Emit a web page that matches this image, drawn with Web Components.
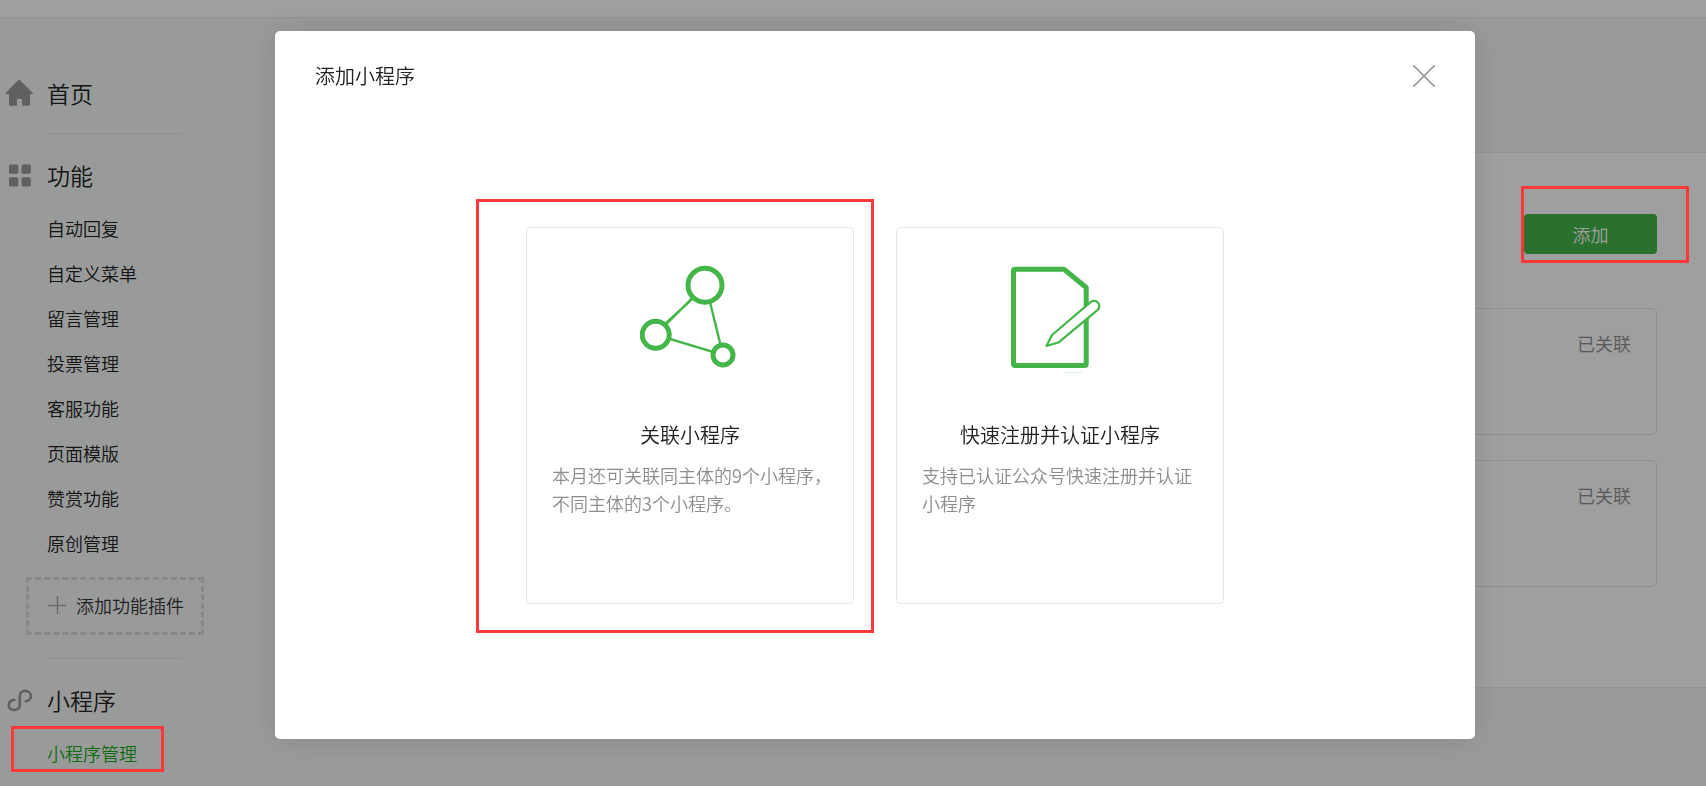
<!DOCTYPE html>
<html lang="zh-CN">
<head>
<meta charset="utf-8">
<title>小程序管理</title>
<style>
  html, body { margin: 0; min-height: 100%; }
  body {
    background: #f6f8f7;
    color: #222;
    font: 350 18px/28px "Noto Sans CJK SC", sans-serif;
    overflow: hidden;
  }
</style>
</head>
<body>
<admin-page></admin-page>

<script>
const define = (name, html) => {
  const template = document.createElement("template");
  template.innerHTML = html;
  customElements.define(name, class extends HTMLElement {
    constructor() {
      super();
      this.attachShadow({ mode: "open" }).append(template.content.cloneNode(true));
    }
  });
};

/* Red frame that surrounds its nearest positioned ancestor */
define("mark-frame", `
<style>
  :host {
    position: absolute; z-index: 20; pointer-events: none; box-sizing: border-box;
    inset: var(--frame-inset, 0); border: 3px solid #fc3838;
  }
</style>`);

define("nav-section", `
<style>
  :host { display: block; }
  h2 { display: grid; grid-template-columns: 47px 1fr; align-items: center; margin: 0; font: inherit; font-size: 23px; line-height: 30px; }
  .icon { display: flex; padding-left: 5px; }
  ul { display: block; margin: 0; padding: 16px 0 0 47px; }
</style>
<h2><span class="icon"><slot name="icon"></slot></span><slot name="title"></slot></h2>
<ul><slot></slot></ul>`);

define("nav-item", `
<style>
  :host { display: block; line-height: 45px; }
  a { position: relative; display: inline-block; color: inherit; text-decoration: none; }
  :host([active]) a { color: #1aad19; }
  mark-frame { display: none; --frame-inset: -5px -27px 4px -36px; }
  :host([active]) mark-frame { display: block; }
</style>
<a href="#"><slot></slot><mark-frame></mark-frame></a>`);

define("nav-divider", `
<style>
  :host { display: block; height: 1px; width: 134px; margin: 23px 0 26px 48px; background: #e4e6e5; }
</style>`);

define("add-plugin", `
<style>
  :host { display: block; margin: 11px 0 0 26px; }
  button {
    box-sizing: border-box; display: flex; align-items: center; gap: 10px; width: 178px; height: 58px;
    padding: 0 0 2px 19px; border: 3px dashed #d9dadc; background: none; color: #353535; font: inherit; cursor: pointer;
    white-space: nowrap;
  }
  svg { flex: none; }
</style>
<button type="button">
  <svg width="18" height="18" viewBox="0 0 18 18" stroke="#aaa" stroke-width="1.500"><path d="M0 9.500h18M9.500 0v18"/></svg>
  <slot></slot>
</button>`);

define("main-nav", `
<style>
  :host { display: block; padding-top: 60px; }
  svg { display: block; }
  .home { height: 32px; overflow: visible; }
</style>
<nav>
  <nav-section class="home">
    <svg slot="icon" width="28" height="28" viewBox="0 0 28 28" fill="#9a9a9a"><path d="M13 1.200q1-.8 2 0L27.600 13.800q.6 1.200-.6 1.200H25v10.500q0 1.300-1.300 1.300H17V20h-5v6.800H5.300Q4 26.800 4 25.500V15H1.500q-1.200 0-.6-1.200z"/></svg>
    <span slot="title">首页</span>
  </nav-section>
  <nav-divider></nav-divider>
  <nav-section>
    <svg slot="icon" width="28" height="28" viewBox="0 0 28 28" fill="#9a9a9a"><rect x="4" y="3.500" width="9.300" height="9.300" rx="1.500"/><rect x="16.500" y="3.500" width="9.300" height="9.300" rx="1.500"/><rect x="4" y="16.200" width="9.300" height="9.300" rx="1.500"/><rect x="16.500" y="16.200" width="9.300" height="9.300" rx="1.500"/></svg>
    <span slot="title">功能</span>
    <nav-item>自动回复</nav-item>
    <nav-item>自定义菜单</nav-item>
    <nav-item>留言管理</nav-item>
    <nav-item>投票管理</nav-item>
    <nav-item>客服功能</nav-item>
    <nav-item>页面模版</nav-item>
    <nav-item>赞赏功能</nav-item>
    <nav-item>原创管理</nav-item>
  </nav-section>
  <add-plugin>添加功能插件</add-plugin>
  <nav-divider></nav-divider>
  <nav-section>
    <svg slot="icon" width="28" height="28" viewBox="0 0 28 28" fill="none" stroke="#9a9a9a" stroke-width="2.600" stroke-linecap="round"><path d="M9.300 13.800C1.500 15 2.600 24.100 9 24.100c3.700 0 5.800-2.200 5.800-5V10c0-3.200 2.300-5.100 5.400-5.100 7 0 8.200 9.400.5 10.300"/></svg>
    <span slot="title">小程序</span>
    <nav-item active>小程序管理</nav-item>
  </nav-section>
</nav>`);

define("linked-app", `
<style>
  :host {
    box-sizing: border-box; display: flex; justify-content: flex-end; min-height: 127px;
    padding: 20px 25px; border: 1px solid #e4e4e4; border-radius: 5px; color: #8d8d8d;
  }
</style>
<slot></slot>`);

define("app-panel", `
<style>
  :host {
    box-sizing: border-box; display: flex; flex-direction: column; gap: 54px; min-height: 536px;
    padding: 61px 49px 98px; background: #fff; border: solid #ededef; border-width: 1px 0;
  }
  .bar { display: flex; justify-content: flex-end; }
  .add { position: relative; display: flex; --frame-inset: -28px -32px -9px -3px; }
  button { width: 133px; height: 40px; padding: 0; border: 0; border-radius: 4px; background: #44b549; color: #fff; font: inherit; cursor: pointer; }
  .list { display: grid; gap: 25px; }
</style>
<div class="bar"><div class="add"><button type="button">添加</button><mark-frame></mark-frame></div></div>
<div class="list"><linked-app>已关联</linked-app><linked-app>已关联</linked-app></div>`);

define("option-card", `
<style>
  :host { position: relative; display: block; }
  .card {
    box-sizing: border-box; min-height: 377px; padding: 34px 19px 24px 25px; border: 1px solid #e7e7eb; border-radius: 5px;
  }
  .icon { display: flex; justify-content: center; padding-right: 6px; }
  h4 { margin: 47px 0 12px; padding-right: 6px; font: inherit; font-size: 20px; line-height: 28px; text-align: center; }
  p { margin: 0; color: #8d8d8d; }
</style>
<div class="card">
  <div class="icon"><slot name="icon"></slot></div>
  <h4><slot name="title"></slot></h4>
  <p><slot></slot></p>
</div>
<slot name="mark"></slot>`);

define("modal-dialog", `
<style>
  :host {
    position: fixed; inset: 0; z-index: 10; box-sizing: border-box; display: flex; justify-content: center; align-items: flex-start;
    padding: 31px 0 0 44px; background: rgba(0, 0, 0, .375);
  }
  section { width: 1200px; max-width: 94%; background: #fff; border-radius: 5px; box-shadow: 0 0 32px rgba(0, 0, 0, .12); }
  header { display: flex; align-items: center; justify-content: space-between; padding: 30px 40px; }
  h3 { margin: 0; font: inherit; font-size: 20px; line-height: 30px; }
  button { display: flex; padding: 0; border: 0; background: none; cursor: pointer; }
  .body { padding: 106px 24px 135px; }
</style>
<section role="dialog" aria-modal="true" aria-labelledby="title">
  <header>
    <h3 id="title"><slot name="title"></slot></h3>
    <button type="button" aria-label="关闭"><svg width="22" height="22" viewBox="0 0 22 22" stroke="#999" stroke-width="1.600"><path d="M0 0l22 22M22 0L0 22"/></svg></button>
  </header>
  <div class="body"><slot></slot></div>
</section>`);

define("add-app-dialog", `
<style>
  :host { display: block; }
  .options { display: grid; grid-template-columns: 328px 328px; justify-content: center; gap: 42px; }
  mark-frame { --frame-inset: -28px -20px -29px -50px; }
</style>
<modal-dialog>
  <span slot="title">添加小程序</span>
  <div class="options">
    <option-card>
      <svg slot="icon" width="100" height="112" viewBox="0 0 100 112" fill="#fff" stroke="#44b549">
        <path fill="none" stroke-width="2.400" d="M67 23.300L15.700 70.700M65 23.300L15.700 72.700 83 93 67.500 30"/>
        <g stroke-width="5"><circle cx="65" cy="23.300" r="17"/><circle cx="15.700" cy="72.700" r="13.500"/><circle cx="83" cy="93" r="10"/></g>
      </svg>
      <span slot="title">关联小程序</span>
      本月还可关联同主体的9个小程序，不同主体的3个小程序。
      <mark-frame slot="mark"></mark-frame>
    </option-card>
    <option-card>
      <svg slot="icon" width="100" height="112" viewBox="0 0 100 112" fill="#fff" stroke="#44b549" stroke-linejoin="round">
        <path stroke-width="5" d="M5 7.200h49l22.200 18.300V102q0 1.500-1.500 1.500H5q-1.500 0-1.500-1.500V8.700Q3.500 7.200 5 7.200z"/>
        <path stroke-width="2.200" d="M36.500 84l5.500-11L80.300 40.300a5.200 5.200 0 0 1 7.400 7.600L49 80.200z"/>
        <path stroke-width="1" opacity=".2" d="M53 110.500h19"/>
      </svg>
      <span slot="title">快速注册并认证小程序</span>
      支持已认证公众号快速注册并认证小程序
    </option-card>
  </div>
</modal-dialog>`);

define("admin-page", `
<style>
  :host { display: block; }
  header { height: 17px; background: #fff; border-bottom: 1px solid #ededef; }
  .columns { display: grid; grid-template-columns: 275px 1fr; align-items: start; }
  main { padding-top: 134px; }
</style>
<header></header>
<div class="columns">
  <main-nav></main-nav>
  <main><app-panel></app-panel></main>
</div>
<add-app-dialog></add-app-dialog>`);
</script>
</body>
</html>
